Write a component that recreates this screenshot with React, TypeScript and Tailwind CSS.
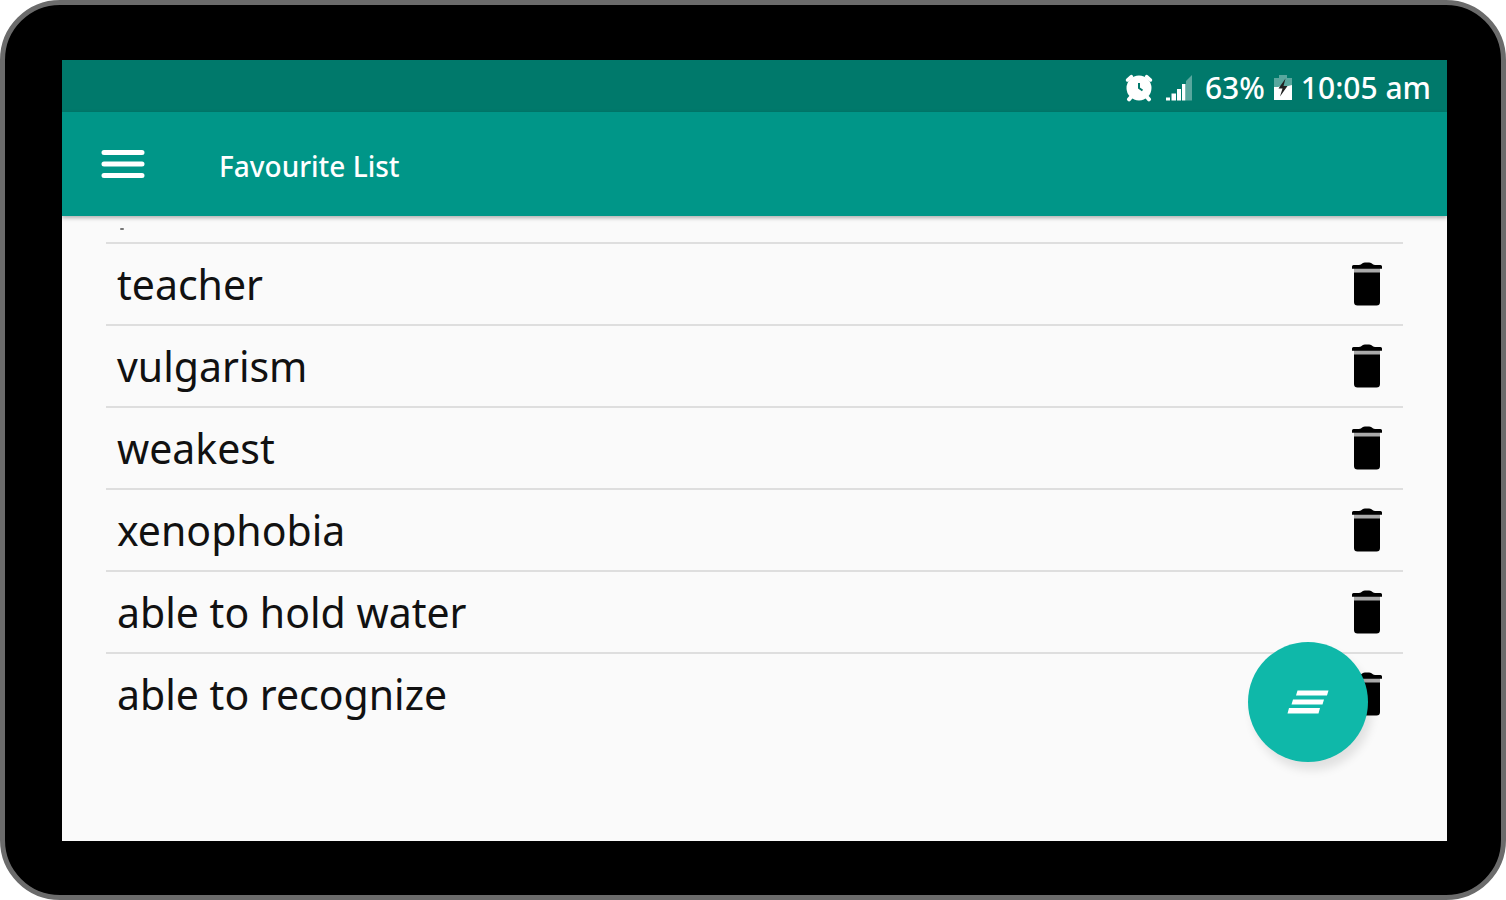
import React from 'react';

const words = ['teacher', 'vulgarism', 'weakest', 'xenophobia', 'able to hold water', 'able to recognize'];

function AlarmIcon() {
  return (
    <svg viewBox="0 0 28 28" className="h-7 w-7" aria-hidden="true">
      <g fill="none" stroke="#fff" strokeLinecap="round">
        <path d="M2.500 6 6.400 2.600M21.600 2.600 25.500 6" strokeWidth="3.500" />
        <path d="M6.500 22.500 4 25.300M21.500 22.500 24 25.300" strokeWidth="4" />
      </g>
      <circle cx="14" cy="14" r="12.500" fill="#fff" />
      <path d="M14 9V14L17.500 16.500" fill="none" stroke="#00796b" strokeWidth="2" />
    </svg>
  );
}

function SignalIcon() {
  return (
    <svg viewBox="0 0 28 28" className="h-7 w-7" aria-hidden="true">
      <path d="M1 23.500h4v3H1zM6.500 19.500h4.500v7H6.500zM12 15h4v11.500h-4z" fill="#fff" />
      <path d="M17 10h3.500v16.500H17z" fill="#fff" />
      <path d="M21 7 27 1v25.500h-6z" fill="#59a79e" />
    </svg>
  );
}

function BatteryIcon() {
  return (
    <svg viewBox="0 0 20 28" className="h-7 w-5" aria-hidden="true">
      <path d="M6 1h8v3h5v9H1V4h5z" fill="#59a79e" />
      <path d="M1 13h4l4-1h6l4-1v15H1z" fill="#fff" />
      <path d="M12.500 4.500 5.500 14.500h4l-2.500 8 7.500-10.500h-4z" fill="#222" />
    </svg>
  );
}

function MenuIcon() {
  return (
    <svg viewBox="0 0 44 32" className="h-8 w-11" aria-hidden="true">
      <path d="M3 4.500h38M3 16h38M3 27.500h38" stroke="#fff" strokeWidth="5" strokeLinecap="round" />
    </svg>
  );
}

function TrashIcon() {
  return (
    <svg viewBox="0 0 32 44" className="h-11 w-8" aria-hidden="true">
      <path d="M3 6h26v5H3z" fill="#aaa" />
      <path d="M1 4.500Q1 3 2.500 3H8Q10 3 11.500 1.300Q12.500 .500 14 .500H18Q19.500 .500 20.500 1.300Q22 3 24 3H29.500Q31 3 31 4.500V6.800H1z" fill="#000" />
      <path d="M3 10.500H29V40Q29 43.500 25.500 43.500H6.500Q3 43.500 3 40z" fill="#000" />
    </svg>
  );
}

function ClearAllIcon() {
  return (
    <svg viewBox="0 0 42 24" className="h-6 w-[42px]" aria-hidden="true">
      <path d="M10.500 .500H41.500L40 5.500H9zM6 9.500H37L35.500 14.500H4.500zM2 18H33L31.500 23.500H.500z" fill="#fff" />
    </svg>
  );
}

function WordRow({ word }: { word: string }) {
  return (
    <li className="flex h-[82px] items-center justify-between border-t-2 border-[#dedede] pr-5 pl-[11px]">
      <span className="text-[41px] leading-[56px] text-[#111]">{word}</span>
      <button type="button" aria-label={`Delete ${word}`}>
        <TrashIcon />
      </button>
    </li>
  );
}

export default function App() {
  return (
    <div className="flex min-h-screen bg-white font-['Noto_Sans',sans-serif]">
      <div className="flex flex-1 rounded-[60px] border-[5px] border-[#6b6b6b] bg-black px-[55px] pt-[55px] pb-[54px]">
        <div className="relative ml-[2px] mr-[-1px] flex flex-1 flex-col bg-[#fafafa]">
          <div className="flex h-[52px] items-center justify-end bg-[#00796b] pt-1 pr-4 text-[30px] leading-10 font-medium text-white">
            <div className="flex items-center gap-3">
              <AlarmIcon />
              <SignalIcon />
              <div className="flex items-center gap-2">
                <span>63%</span>
                <BatteryIcon />
                <time>10:05 am</time>
              </div>
            </div>
          </div>
          <header className="flex h-[104px] items-center bg-[#009688] pl-[39px] text-white shadow-[0_2px_4px_rgba(0,0,0,0.3)]">
            <button type="button" aria-label="Open menu">
              <MenuIcon />
            </button>
            <h1 className="ml-[74px] pt-1 text-[28px] leading-10 font-medium">Favourite List</h1>
          </header>
          <main className="flex-1 px-11">
            <div className="flex h-[26px] items-center pl-[14px]">
              <span className="h-[2px] w-1 rounded-full bg-[#777]" />
            </div>
            <ul>
              {words.map((word) => (
                <WordRow key={word} word={word} />
              ))}
            </ul>
          </main>
          <button
            type="button"
            aria-label="Clear list"
            className="absolute right-[79px] bottom-[79px] flex size-[120px] items-center justify-center rounded-full bg-[#0fb8a9] shadow-[4px_8px_10px_rgba(0,0,0,0.1)]"
          >
            <ClearAllIcon />
          </button>
        </div>
      </div>
    </div>
  );
}
